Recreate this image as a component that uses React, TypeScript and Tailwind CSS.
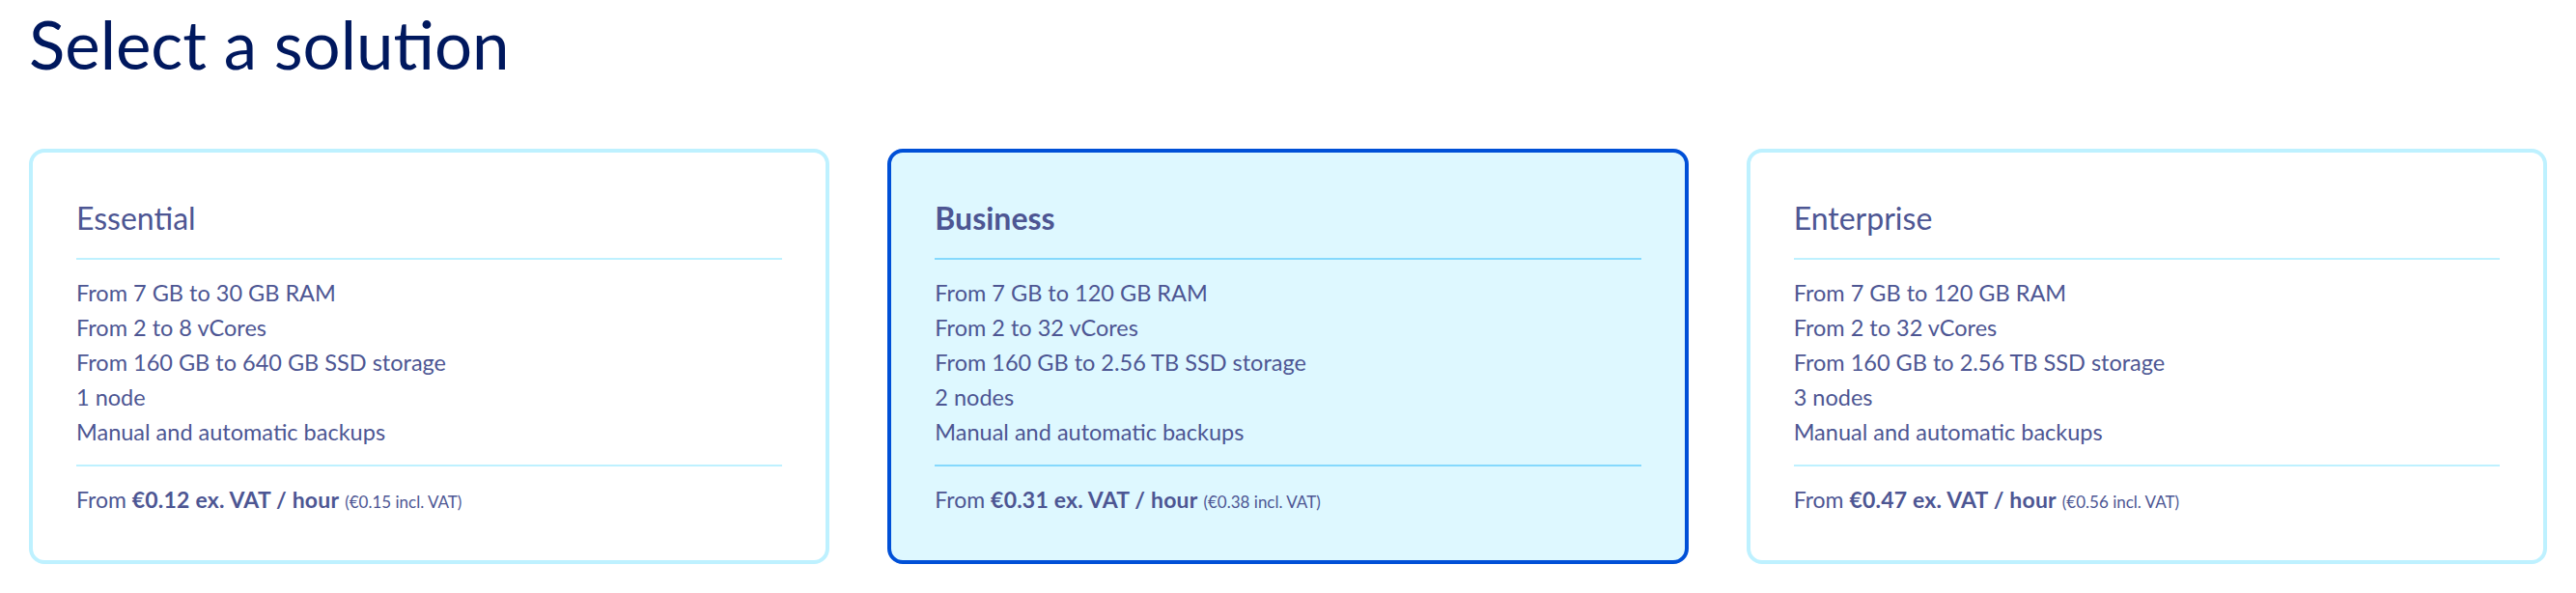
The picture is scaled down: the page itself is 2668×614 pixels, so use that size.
const plans = [
  {
    name: "Essential",
    selected: false,
    specs: [
      "From 7 GB to 30 GB RAM",
      "From 2 to 8 vCores",
      "From 160 GB to 640 GB SSD storage",
      "1 node",
      "Manual and automatic backups",
    ],
    price: "€0.12",
    priceVat: "€0.15",
  },
  {
    name: "Business",
    selected: true,
    specs: [
      "From 7 GB to 120 GB RAM",
      "From 2 to 32 vCores",
      "From 160 GB to 2.56 TB SSD storage",
      "2 nodes",
      "Manual and automatic backups",
    ],
    price: "€0.31",
    priceVat: "€0.38",
  },
  {
    name: "Enterprise",
    selected: false,
    specs: [
      "From 7 GB to 120 GB RAM",
      "From 2 to 32 vCores",
      "From 160 GB to 2.56 TB SSD storage",
      "3 nodes",
      "Manual and automatic backups",
    ],
    price: "€0.47",
    priceVat: "€0.56",
  },
];

type Plan = (typeof plans)[number];

const PlanCard = ({ plan }: { plan: Plan }) => {
  const divider = plan.selected ? "bg-[#85d9fd]" : "bg-[#bef1ff]";
  return (
    <div
      className={`flex flex-col rounded-[16px] border-4 px-[45px] pt-[48px] pb-[42px] text-[#4d5693] ${
        plan.selected ? "border-[#0050d7] bg-[#def8ff]" : "border-[#bef1ff] bg-white"
      }`}
    >
      <h3 className={`text-[32px] leading-[40px] ${plan.selected ? "font-bold" : "font-normal"}`}>
        {plan.name}
      </h3>
      <div className={`mt-[21px] h-[2px] ${divider}`}></div>
      <ul className="mt-[16px] text-[23.5px] leading-[36px]">
        {plan.specs.map((s) => (
          <li key={s}>{s}</li>
        ))}
      </ul>
      <div className={`mt-[16px] h-[2px] ${divider}`}></div>
      <p className="mt-[16px] text-[23px] leading-[36px]">
        From <strong className="font-bold tracking-[0.2px]">{plan.price} ex. VAT / hour</strong>{" "}
        <span className="text-[17px]">({plan.priceVat} incl. VAT)</span>
      </p>
    </div>
  );
};

export default function App() {
  return (
    <div className="min-h-screen bg-white px-[30px] pt-[4px] font-['Lato',sans-serif]">
      <h1 className="text-[69px] leading-[83px] font-normal text-[#00185e]">Select a solution</h1>
      <div className="mt-[67px] grid grid-cols-3 gap-[60px]">
        {plans.map((p) => (
          <PlanCard key={p.name} plan={p} />
        ))}
      </div>
    </div>
  );
}
